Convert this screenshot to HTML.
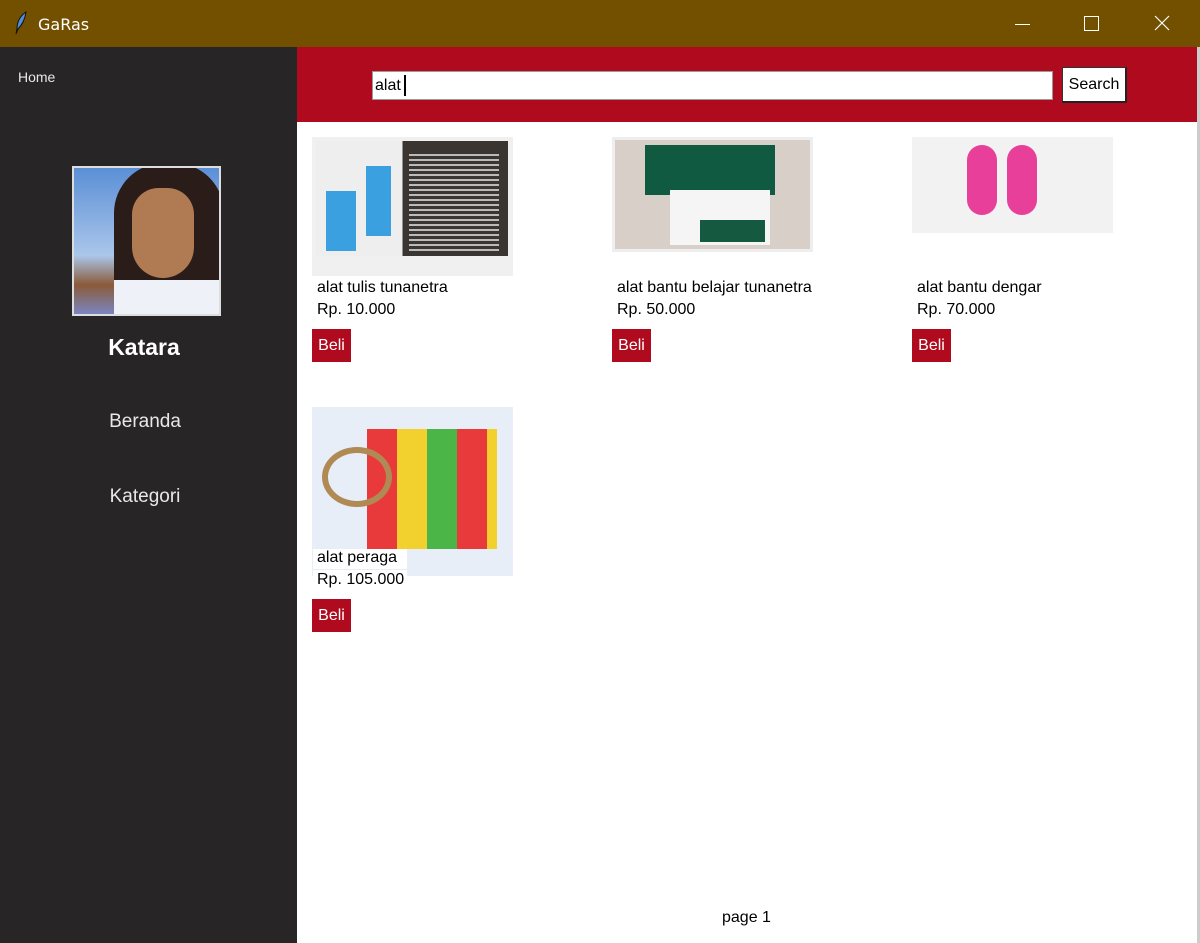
<!DOCTYPE html>
<html><head><meta charset="utf-8"><style>
*{margin:0;padding:0;box-sizing:border-box}
body{width:1200px;height:943px;overflow:hidden;background:#fff;font-family:"Liberation Sans",Arial,sans-serif;position:relative}
.a{position:absolute}
.t{font-size:16px;color:#000;white-space:nowrap}
.beli{position:absolute;width:39px;height:33px;background:#b00a1e;color:#fff;font-size:16px;line-height:33px;text-align:center}
</style></head><body>
<div class="a" style="left:0;top:0;width:1200px;height:47px;background:#735000"></div>
<svg class="a" style="left:12px;top:10px" width="18" height="26" viewBox="0 0 18 26"><path d="M14 2 C8 6 5 12 5 19 L4 24 L6 19 C10 15 13 9 14 2Z" fill="#4f8fd8" stroke="#111" stroke-width="1"/></svg>
<div class="a" style="left:38px;top:15px;color:#fff;font-size:16px;font-family:'DejaVu Sans',sans-serif">GaRas</div>
<div class="a" style="left:1015px;top:24px;width:15px;height:1px;background:#fff"></div>
<div class="a" style="left:1084px;top:16px;width:15px;height:15px;border:1px solid #fff"></div>
<svg class="a" style="left:1154px;top:15px" width="16" height="16"><path d="M1 1L15 15M15 1L1 15" stroke="#fff" stroke-width="1.2"/></svg>

<div class="a" style="left:0;top:47px;width:297px;height:896px;background:#272526"></div>
<div class="a" style="left:18px;top:69px;color:#e8e8e8;font-size:14px">Home</div>
<div class="a" style="left:72px;top:166px;width:149px;height:150px;border:2px solid #ddd;background:linear-gradient(#5b8fd6,#aac6ea 60%,#8a5a3a 80%,#7b85c0);overflow:hidden">
 <div class="a" style="left:40px;top:-5px;width:110px;height:150px;background:#2a1c18;border-radius:50px 50px 0 0"></div>
 <div class="a" style="left:58px;top:20px;width:62px;height:90px;background:#b07a52;border-radius:30px 30px 35px 35px"></div>
 <div class="a" style="left:40px;top:112px;width:110px;height:40px;background:#eef2f8"></div>
</div>
<div class="a" style="left:0;top:334px;width:288px;text-align:center;color:#fff;font-weight:bold;font-size:23px">Katara</div>
<div class="a" style="left:0;top:411px;width:290px;text-align:center;color:#e8e8e8;font-size:19px">Beranda</div>
<div class="a" style="left:0;top:486px;width:290px;text-align:center;color:#e8e8e8;font-size:19px">Kategori</div>

<div class="a" style="left:297px;top:47px;width:900px;height:75px;background:#b00a1e"></div>
<div class="a" style="left:1197px;top:47px;width:3px;height:896px;background:#ccc"></div>
<div class="a" style="left:372px;top:71px;width:681px;height:29px;background:#fff;border:1px solid #999"></div>
<div class="a" style="left:375px;top:77px;font-size:16px">alat</div>
<div class="a" style="left:404px;top:75px;width:2px;height:21px;background:#000"></div>
<div class="a" style="left:1062px;top:67px;width:65px;height:36px;background:#fff;border:1px solid #333;border-right:2px solid #222;border-bottom:2px solid #222;font-size:16px;line-height:33px;text-align:center">Search</div>

<div class="a" style="left:312px;top:137px;width:201px;height:139px;background:#f0f0f0;padding:4px"><div style="width:192px;height:115px;background:linear-gradient(90deg,#eee 45%,#3a3530 45%);position:relative"><div class="a" style="left:10px;top:50px;width:30px;height:60px;background:#3aa0e0"></div><div class="a" style="left:50px;top:25px;width:25px;height:70px;background:#3aa0e0"></div><div class="a" style="left:93px;top:10px;width:90px;height:100px;background:repeating-linear-gradient(#3a3530 0 3px,#bbb 3px 5px)"></div></div></div>
<div class="a t" style="left:317px;top:279px">alat tulis tunanetra</div>
<div class="a t" style="left:317px;top:301px">Rp. 10.000</div>
<div class="beli" style="left:312px;top:329px">Beli</div>

<div class="a" style="left:612px;top:137px;width:201px;height:115px;background:#eee;padding:3px"><div style="width:195px;height:109px;background:#d8cfc8;position:relative"><div class="a" style="left:30px;top:5px;width:130px;height:50px;background:#0f5a40"></div><div class="a" style="left:55px;top:50px;width:100px;height:55px;background:#f5f5f5"></div><div class="a" style="left:85px;top:80px;width:65px;height:22px;background:#155a40"></div></div></div>
<div class="a t" style="left:617px;top:279px">alat bantu belajar tunanetra</div>
<div class="a t" style="left:617px;top:301px">Rp. 50.000</div>
<div class="beli" style="left:612px;top:329px">Beli</div>

<div class="a" style="left:912px;top:137px;width:201px;height:96px;background:#f2f2f2"><div class="a" style="left:55px;top:8px;width:30px;height:70px;background:#e8409a;border-radius:15px"></div><div class="a" style="left:95px;top:8px;width:30px;height:70px;background:#e8409a;border-radius:15px"></div></div>
<div class="a t" style="left:917px;top:279px">alat bantu dengar</div>
<div class="a t" style="left:917px;top:301px">Rp. 70.000</div>
<div class="beli" style="left:912px;top:329px">Beli</div>

<div class="a" style="left:312px;top:407px;width:201px;height:169px;background:#e8eef8;overflow:hidden"><div class="a" style="left:55px;top:22px;width:130px;height:120px;background:repeating-linear-gradient(90deg,#e83a3a 0 30px,#f2d12e 30px 60px,#4bb548 60px 90px)"></div><div class="a" style="left:10px;top:40px;width:70px;height:60px;border:6px solid #b08a55;border-radius:50%"></div></div>
<div class="a" style="left:313px;top:549px;width:94px;height:20px;background:#fff"></div>
<div class="a t" style="left:317px;top:549px">alat peraga</div>
<div class="a" style="left:313px;top:570px;width:94px;height:20px;background:#fff"></div>
<div class="a t" style="left:317px;top:571px">Rp. 105.000</div>
<div class="beli" style="left:312px;top:599px">Beli</div>

<div class="a t" style="left:722px;top:909px">page 1</div>
</body></html>
